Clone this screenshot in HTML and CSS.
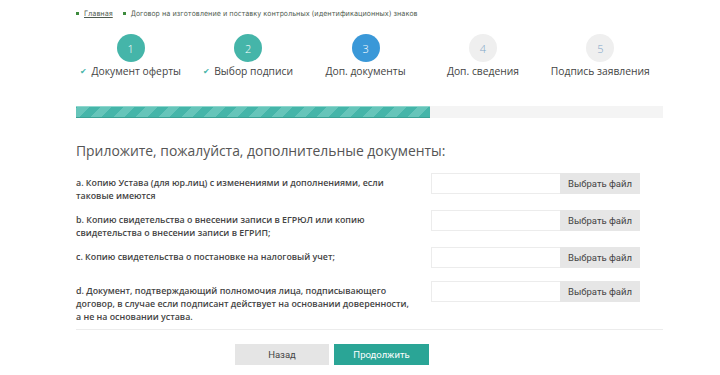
FILE: index.html
```html
<!DOCTYPE html>
<html lang="ru">
<head>
    <meta charset="UTF-8">
    <meta name="viewport" content="width=device-width, initial-scale=1.0">
    <title>Дополнительные документы</title>
    <link rel="stylesheet" href="styles.css">
</head>
<body>
    <div class="page">
        <!-- Хлебные крошки -->
        <ul class="breadcrumbs">
            <li><a href="#">Главная</a></li>
            <li>Договор на изготовление и поставку контрольных (идентификационных) знаков</li>
        </ul>

        <!-- Шаги -->
        <div class="steps">
            <div class="step done">
                <div class="step-num">1</div>
                <div class="step-title"><span class="check">&#10004;</span>Документ оферты</div>
            </div>
            <div class="step done">
                <div class="step-num">2</div>
                <div class="step-title"><span class="check">&#10004;</span>Выбор подписи</div>
            </div>
            <div class="step active">
                <div class="step-num">3</div>
                <div class="step-title">Доп. документы</div>
            </div>
            <div class="step">
                <div class="step-num">4</div>
                <div class="step-title">Доп. сведения</div>
            </div>
            <div class="step">
                <div class="step-num">5</div>
                <div class="step-title">Подпись заявления</div>
            </div>
        </div>

        <div class="progress">
            <div class="progress-fill" style="width: 60.3%"></div>
        </div>

        <h1>Приложите, пожалуйста, дополнительные документы:</h1>

        <div class="docs">
            <div class="doc-row">
                <div class="doc-label">a. Копию Устава (для юр.лиц) с изменениями и дополнениями, если таковые имеются</div>
                <div class="file-field"><span class="file-name"></span><span class="file-btn">Выбрать файл</span></div>
            </div>
            <div class="doc-row">
                <div class="doc-label">b. Копию свидетельства о внесении записи в ЕГРЮЛ или копию свидетельства о внесении записи в ЕГРИП;</div>
                <div class="file-field"><span class="file-name"></span><span class="file-btn">Выбрать файл</span></div>
            </div>
            <div class="doc-row">
                <div class="doc-label">c. Копию свидетельства о постановке на налоговый учет;</div>
                <div class="file-field"><span class="file-name"></span><span class="file-btn">Выбрать файл</span></div>
            </div>
            <div class="doc-row">
                <div class="doc-label">d. Документ, подтверждающий полномочия лица, подписывающего договор, в случае если подписант действует на основании доверенности, а не на основании устава.</div>
                <div class="file-field"><span class="file-name"></span><span class="file-btn">Выбрать файл</span></div>
            </div>
        </div>

        <div class="actions">
            <button class="btn btn-back">Назад</button>
            <button class="btn btn-next">Продолжить</button>
        </div>
    </div>
</body>
</html>
```

FILE: styles.css
```css
/* Базовые стили */
* {
    margin: 0;
    padding: 0;
    box-sizing: border-box;
}

body {
    font-family: "Open Sans", Arial, sans-serif;
    background: #fff;
    color: #444;
}

.page {
    width: 587px;
    margin-left: 76px;
}

/* Хлебные крошки */
.breadcrumbs {
    list-style: none;
    display: flex;
    gap: 10px;
    padding-top: 8px;
    height: 40px;
    font-family: "DejaVu Sans Condensed", "DejaVu Sans", sans-serif;
    font-size: 7.4px;
    color: #4f5b4f;
}

.breadcrumbs li {
    display: flex;
    align-items: center;
    height: 11px;
}

.breadcrumbs li::before {
    content: "";
    width: 3px;
    height: 3px;
    background: #3d8b3d;
    margin-right: 5px;
}

.breadcrumbs a {
    color: #4f5b4f;
    text-decoration: underline;
}

/* Шаги */
.steps {
    display: flex;
    margin-left: -4px;
    margin-right: 4px;
    margin-top: -6px;
}

.step {
    flex: 1;
    display: flex;
    flex-direction: column;
    align-items: center;
}

.step-num {
    width: 28px;
    height: 28px;
    border-radius: 50%;
    background: #efefef;
    color: #7fa6c8;
    font-size: 11px;
    font-weight: 300;
    display: flex;
    align-items: center;
    justify-content: center;
}

.step.done .step-num {
    background: #45b5a9;
    color: #fff;
}

.step.active .step-num {
    background: #3a98d8;
    color: #fff;
}

.step-title {
    margin-top: 1px;
    font-size: 10.3px;
    line-height: 16px;
    color: #444;
    white-space: nowrap;
}

.check {
    color: #45b5a9;
    font-size: 8px;
    margin-right: 4px;
    vertical-align: 1px;
}

/* Прогресс */
.progress {
    margin-top: 27px;
    height: 12px;
    background: #f4f4f4;
}

.progress-fill {
    height: 100%;
    background-color: #45b5a9;
    background-image: repeating-linear-gradient(
        -45deg,
        transparent 0,
        transparent 8px,
        #66c5ba 8px,
        #66c5ba 16px
    );
    border-top: 1px solid #8fd8cf;
    border-bottom: 1px solid #3aa295;
}

h1 {
    margin-top: 22px;
    font-size: 13.9px;
    font-weight: 400;
    color: #555;
    line-height: 22px;
}

/* Документы */
.docs {
    margin-top: 11px;
    padding-bottom: 5px;
    border-bottom: 1px solid #ececec;
}

.doc-row {
    display: flex;
    justify-content: space-between;
    align-items: flex-start;
    min-height: 27px;
    margin-bottom: 7px;
}

.doc-row:last-child {
    margin-bottom: 0;
}

.doc-label {
    width: 340px;
    padding-top: 4px;
    font-size: 8.85px;
    font-weight: 600;
    line-height: 13px;
    color: #444;
}

.file-field {
    display: flex;
    height: 21px;
    margin-right: 23px;
}

.file-name {
    width: 129px;
    border: 1px solid #ececec;
    border-right: none;
    background: #fff;
}

.file-btn {
    width: 80px;
    background: #e6e6e6;
    font-family: Roboto, Arial, sans-serif;
    font-size: 9.5px;
    color: #444;
    display: flex;
    align-items: center;
    justify-content: center;
}

/* Кнопки */
.actions {
    display: flex;
    gap: 5px;
    margin-top: 14px;
    padding-left: 159px;
}

.btn {
    width: 94px;
    height: 21px;
    border: none;
    font-family: Roboto, Arial, sans-serif;
    font-size: 9.5px;
    cursor: pointer;
}

.btn-back {
    background: #e5e5e5;
    color: #444;
}

.btn-next {
    width: 95px;
    background: #2aa596;
    color: #fff;
}
```
